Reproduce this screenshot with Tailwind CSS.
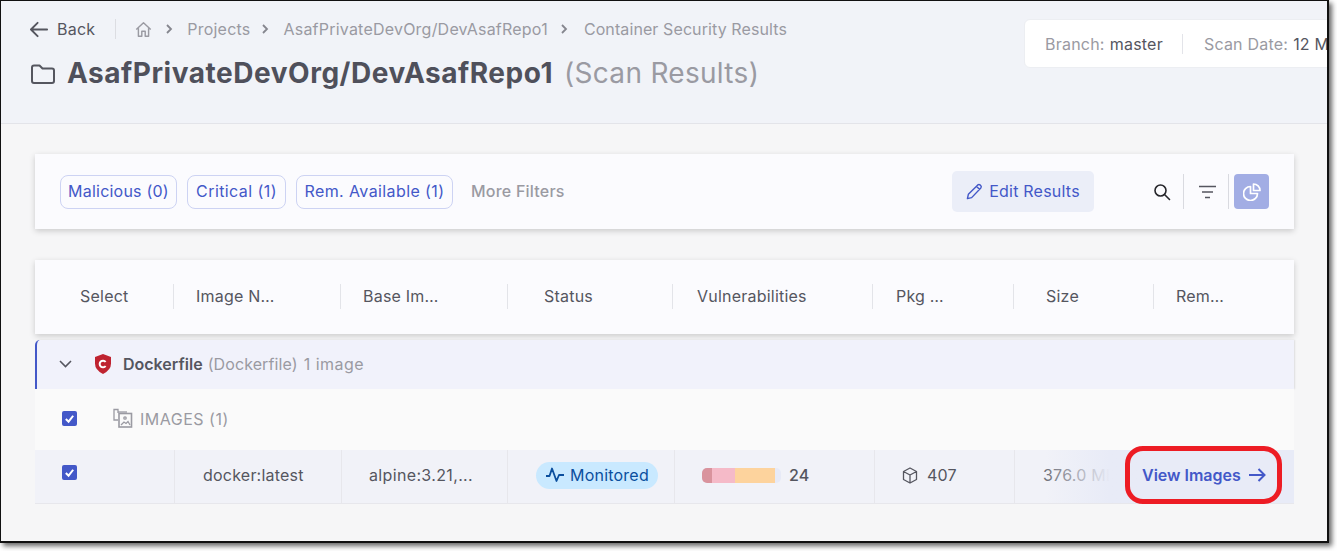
<!DOCTYPE html>
<html lang="en">
<head>
    <meta charset="UTF-8">
    <title>Container Security Results</title>
    <script src="https://cdn.jsdelivr.net/npm/@tailwindcss/browser@4"></script>
</head>
<body class="bg-white font-['Inter',sans-serif] overflow-hidden h-[551px] tracking-[0.22px]">
    <div class="relative w-[1329px] h-[543px] border-r-2 border-b-2 border-[#111] border-t-[1px] border-l-[1px] bg-[#f6f6f7] overflow-hidden shadow-[3px_3px_5px_rgba(0,0,0,0.6)]">

        <!-- Header -->
        <header class="h-[123px] bg-[#f1f3f8] border-b border-[#e3e4e9] pl-[29px] pt-[16px] relative">
            <div class="flex items-center h-[24px] text-[16px] text-[#9a9aa2]">
                <svg class="w-[19px] h-[19px] text-[#55565f]" viewBox="0 0 20 20" fill="none" stroke="currentColor" stroke-width="2" stroke-linecap="round" stroke-linejoin="round"><path d="M1 10h17M8 3l-7 7 7 7"/></svg>
                <span class="ml-[8px] text-[#55565f]">Back</span>
                <div class="w-px h-[20px] bg-[#dcdde2] ml-[20px]"></div>
                <svg class="w-[17px] h-[17px] ml-[19px] text-[#9a9aa2]" viewBox="0 0 20 20" fill="none" stroke="currentColor" stroke-width="1.7" stroke-linejoin="round"><path d="M1.500 10 10 2l8.500 8M4 8.500V18h4v-6h4v6h4V8.500"/></svg>
                <svg class="w-[10px] h-[10px] ml-[12px]" viewBox="0 0 10 10" fill="none" stroke="#85868e" stroke-width="1.800"><path d="M3 1l4 4-4 4"/></svg>
                <span class="ml-[13px]">Projects</span>
                <svg class="w-[10px] h-[10px] ml-[10px]" viewBox="0 0 10 10" fill="none" stroke="#85868e" stroke-width="1.800"><path d="M3 1l4 4-4 4"/></svg>
                <span class="ml-[13px]">AsafPrivateDevOrg/DevAsafRepo1</span>
                <svg class="w-[10px] h-[10px] ml-[11px]" viewBox="0 0 10 10" fill="none" stroke="#85868e" stroke-width="1.800"><path d="M3 1l4 4-4 4"/></svg>
                <span class="ml-[15px] tracking-[0.1px]">Container Security Results</span>
            </div>
            <div class="flex items-center mt-[12px] h-[40px]">
                <svg class="w-[26px] h-[22px] text-[#55565f] mt-[2px]" viewBox="0 0 26 22" fill="none" stroke="currentColor" stroke-width="2" stroke-linejoin="round"><path d="M2 4.500Q2 2.500 4 2.500h5.500l3 3H22q2 0 2 2V18q0 2-2 2H4q-2 0-2-2z"/></svg>
                <h1 class="ml-[11px] text-[28px] font-bold text-[#4f505b] tracking-[0.53px]">AsafPrivateDevOrg/DevAsafRepo1</h1>
                <span class="ml-[11px] text-[28px] text-[#9a9aa2] tracking-[0.3px]">(Scan Results)</span>
            </div>
            <div class="absolute left-[1023px] top-[18px] w-[320px] h-[49px] bg-white rounded-[6px] border border-[#eceef2] flex items-center pl-[20px] text-[16px] text-[#9a9aa2] whitespace-nowrap">
                <span>Branch:</span><span class="ml-[5px] text-[#55565f]">master</span>
                <div class="w-px h-[20px] shrink-0 bg-[#e3e4e9] ml-[19px]"></div>
                <span class="ml-[21px]">Scan Date:</span><span class="ml-[5px] text-[#55565f]">12 Mar 2025</span>
            </div>
        </header>

        <main class="pl-[34px] w-[1293px]">
            <!-- Filters -->
            <section class="mt-[30px] h-[75px] bg-[#fbfbfe] shadow-[0_2px_6px_rgba(0,0,0,0.18)] flex items-center pl-[25px] pr-[25px] text-[16px]">
                <div class="flex items-center gap-[10px] text-[#4358c8]">
                    <span class="h-[34px] w-[117px] flex items-center justify-center pb-[2px] border border-[#cdd3f3] rounded-[8px]">Malicious (0)</span>
                    <span class="h-[34px] w-[99px] flex items-center justify-center pb-[2px] border border-[#cdd3f3] rounded-[8px] tracking-[0.42px]">Critical (1)</span>
                    <span class="h-[34px] w-[157px] flex items-center justify-center pb-[2px] border border-[#cdd3f3] rounded-[8px] tracking-[0.4px]">Rem. Available (1)</span>
                </div>
                <span class="ml-[18px] pb-[2px] text-[#9a9aa2] font-medium">More Filters</span>
                <button class="ml-auto w-[142px] h-[41px] bg-[#ebeef8] rounded-[5px] flex items-center justify-center text-[#4358c8]">
                    <svg class="w-[17px] h-[17px]" viewBox="0 0 18 18" fill="none" stroke="currentColor" stroke-width="1.500" stroke-linejoin="round"><path d="M1.500 16.500l1-4.500L12.500 2q1.200-1 2.400 0l.8.8q1 1.200 0 2.400L6 15.500zM11 3.500l3.500 3.500"/></svg>
                    <span class="ml-[6px] pb-[2px]">Edit Results</span>
                </button>
                <svg class="w-[18px] h-[18px] ml-[59px]" viewBox="0 0 18 18" fill="none" stroke="#26262b" stroke-width="1.600" stroke-linecap="round"><circle cx="7.500" cy="7.500" r="5.500"/><path d="M11.500 11.500l5 5"/></svg>
                <div class="w-px h-[35px] bg-[#d9dae0] ml-[12px]"></div>
                <svg class="w-[17px] h-[14px] ml-[15px]" viewBox="0 0 17 14" fill="none" stroke="#55565f" stroke-width="1.500"><path d="M0 1.500h17M3 7h11M6 12.500h5"/></svg>
                <div class="w-px h-[35px] bg-[#d9dae0] ml-[12px]"></div>
                <div class="w-[35px] h-[35px] ml-[5px] bg-[#a2ade4] rounded-[4px] flex items-center justify-center">
                    <svg class="w-[18px] h-[18px]" viewBox="0 0 18 18" fill="none" stroke="#fff" stroke-width="1.700" stroke-linejoin="round"><path d="M7.500 3.500a7 7 0 1 0 7 7h-7zM10.500 1a6.500 6.500 0 0 1 6.500 6.500h-6.500z"/></svg>
                </div>
            </section>

            <!-- Table head -->
            <section class="mt-[31px] h-[74px] pb-[2px] bg-[#fbfbfe] shadow-[0_2px_6px_rgba(0,0,0,0.18)] grid grid-cols-[138px_167px_167px_165px_200px_141px_140px_141px] items-center text-[16px] text-[#55565f]">
                <div class="pl-[45px]">Select</div>
                <div class="h-[25px] flex items-center border-l border-[#e3e4e9] pl-[22px]">Image N…</div>
                <div class="h-[25px] flex items-center border-l border-[#e3e4e9] pl-[22px]">Base Im…</div>
                <div class="h-[25px] flex items-center border-l border-[#e3e4e9] pl-[36px]">Status</div>
                <div class="h-[25px] flex items-center border-l border-[#e3e4e9] pl-[24px]">Vulnerabilities</div>
                <div class="h-[25px] flex items-center border-l border-[#e3e4e9] pl-[23px]">Pkg …</div>
                <div class="h-[25px] flex items-center border-l border-[#e3e4e9] pl-[32px]">Size</div>
                <div class="h-[25px] flex items-center border-l border-[#e3e4e9] pl-[22px]">Rem…</div>
            </section>

            <!-- Group row -->
            <div class="mt-[6px] h-[49px] pb-[2px] bg-[#f1f2fb] border-l-2 border-[#4358c8] rounded-tl-[5px] shadow-[1px_0_2px_rgba(0,0,0,0.1)] flex items-center text-[16px] text-[#9a9aa2]">
                <svg class="w-[13px] h-[8px] ml-[22px]" viewBox="0 0 13 8" fill="none" stroke="#55565f" stroke-width="1.600"><path d="M1 1l5.500 5.500L12 1"/></svg>
                <svg class="w-[18px] h-[20px] ml-[22px]" viewBox="0 0 18 20"><path d="M9 0l8 3v6.500Q17 16 9 20 1 16 1 9.500V3z" fill="#bf2330"/><path d="M11.600 8a3.300 3.300 0 1 0 0 4" fill="none" stroke="#fff" stroke-width="2"/></svg>
                <span class="ml-[11px] font-semibold text-[#55565f] tracking-[0px]">Dockerfile</span>
                <span class="ml-[5px] tracking-[0.1px]">(Dockerfile)</span>
                <span class="ml-[6px] tracking-[0.5px]">1 image</span>
            </div>

            <!-- Images row -->
            <div class="h-[61px] pb-[2px] bg-[#fafafa] flex items-center text-[16px] text-[#9a9aa2]">
                <span class="ml-[27px] w-[15px] h-[15px] rounded-[2px] bg-[#4358c8] flex items-center justify-center">
                    <svg class="w-[11px] h-[11px]" viewBox="0 0 12 12" fill="none" stroke="#fff" stroke-width="2.200"><path d="M2 6.500l3 3 5-6.500"/></svg>
                </span>
                <svg class="w-[20px] h-[20px] ml-[36px] -mt-[1px]" viewBox="0 0 20 20" fill="none" stroke="#9a9aa2" stroke-width="1.300"><path d="M5 5V1.500H1V12h4"/><path d="M5 4h9" /><rect x="6" y="5.500" width="12.500" height="13.500" stroke-width="1.600"/><circle cx="12" cy="10" r="1.200"/><path d="M8 17l3-3 2 1.500 2-2 2 3.500"/></svg>
                <span class="ml-[7px] tracking-[0.5px]">IMAGES (1)</span>
            </div>

            <!-- Data row -->
            <div class="h-[54px] bg-[#f1f2f8] border-b border-[#e7e7ec] grid grid-cols-[139px_167px_166px_167px_200px_140px_139px_141px] text-[16px] text-[#55565f]">
                <div class="pl-[27px] pt-[15px]">
                    <span class="w-[15px] h-[15px] rounded-[2px] bg-[#4358c8] flex items-center justify-center">
                        <svg class="w-[11px] h-[11px]" viewBox="0 0 12 12" fill="none" stroke="#fff" stroke-width="2.200"><path d="M2 6.500l3 3 5-6.500"/></svg>
                    </span>
                </div>
                <div class="flex items-center pb-[3px] border-l border-[#e7e7ec] pl-[28px]">docker:latest</div>
                <div class="flex items-center pb-[3px] border-l border-[#e7e7ec] pl-[27px] tracking-[0.35px]">alpine:3.21,...</div>
                <div class="flex items-center pb-[3px] border-l border-[#e7e7ec] pl-[28px]">
                    <span class="h-[27px] w-[122px] rounded-full bg-[#c9e9ff] text-[#0b4f9e] flex items-center pl-[10px]">
                        <svg class="w-[18px] h-[16px]" viewBox="0 0 18 16" fill="none" stroke="currentColor" stroke-width="1.800" stroke-linejoin="round"><path d="M0 9h3.500L6 1.500 10.500 14 13 8h5"/></svg>
                        <span class="ml-[6px] pb-[1px]">Monitored</span>
                    </span>
                </div>
                <div class="flex items-center pb-[2px] border-l border-[#e7e7ec] pl-[27px]">
                    <div class="w-[79px] h-[15px] rounded-[5px] bg-[#e7eaf7] overflow-hidden flex">
                        <div class="w-[10px] bg-[#d9939d]"></div>
                        <div class="w-[23px] bg-[#f5bac8]"></div>
                        <div class="w-[40px] bg-[#fdd39d]"></div>
                    </div>
                    <span class="ml-[8px] pb-[2px] font-medium">24</span>
                </div>
                <div class="flex items-center pb-[3px] border-l border-[#e7e7ec] pl-[27px]">
                    <svg class="w-[16px] h-[17px]" viewBox="0 0 16 17" fill="none" stroke="#55565f" stroke-width="1.300" stroke-linejoin="round"><path d="M8 1l6.500 3.500v8L8 16l-6.500-3.500v-8zM1.500 4.500L8 8l6.500-3.500M8 8v8"/></svg>
                    <span class="ml-[9px]">407</span>
                </div>
                <div class="relative flex items-center pb-[3px] border-l border-[#e7e7ec] pl-[28px] overflow-hidden text-[#6f7079] whitespace-nowrap">
                    376.0 MB
                    <div class="absolute inset-y-0 left-[30px] right-0 bg-gradient-to-r from-[#e8ebf7]/0 to-[#e8ebf7] to-[60%]"></div>
                </div>
                <div class="bg-[#e8ebf7] flex items-center pb-[3px] text-[#4358c8] whitespace-nowrap -ml-[11px] z-10">
                    <span class="font-semibold tracking-[0px]">View Images</span>
                    <svg class="w-[17px] h-[14px] ml-[8px]" viewBox="0 0 17 14" fill="none" stroke="currentColor" stroke-width="2"><path d="M0 7h15.500M9.500 1l6 6-6 6"/></svg>
                </div>
            </div>
        </main>

        <!-- Red callout drawn over the screenshot -->
        <div class="absolute z-20 left-[1124px] top-[445px] w-[157px] h-[58px] border-[5px] border-[#ed1c24] rounded-[18px]"></div>
    </div>
</body>
</html>
